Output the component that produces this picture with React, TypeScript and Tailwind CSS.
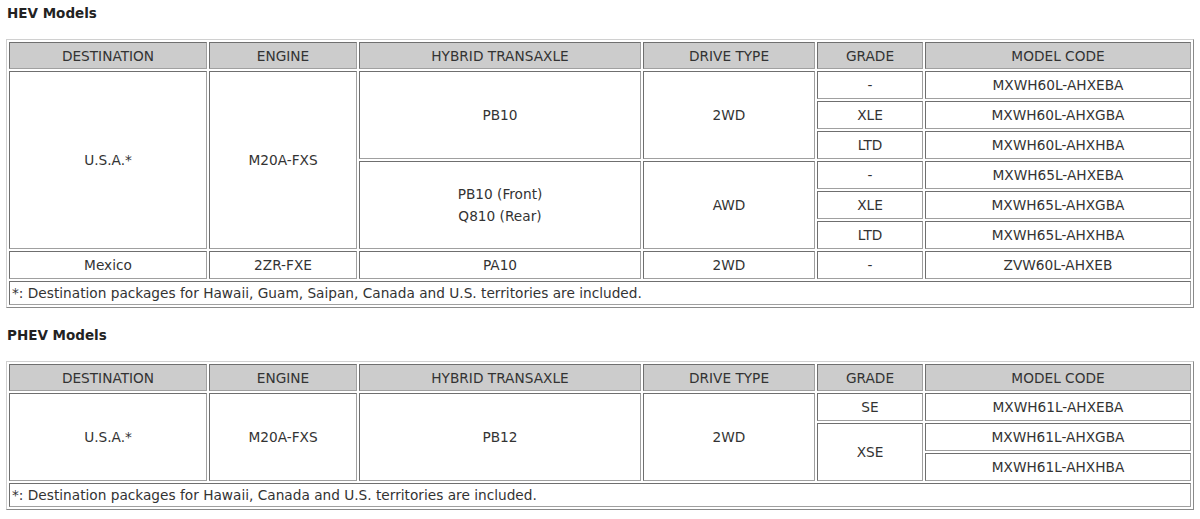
import React from "react";

type Row = { cells: { text: React.ReactNode; rowSpan?: number; lh?: boolean }[] };

const headers = [
  { label: "DESTINATION", w: "w-[198px]" },
  { label: "ENGINE", w: "w-[148px]" },
  { label: "HYBRID TRANSAXLE", w: "w-[282px]" },
  { label: "DRIVE TYPE", w: "w-[172px]" },
  { label: "GRADE", w: "w-[106px]" },
  { label: "MODEL CODE", w: "w-[266px]" },
];

const hevRows: Row[] = [
  {
    cells: [
      { text: "U.S.A.*", rowSpan: 6 },
      { text: "M20A-FXS", rowSpan: 6 },
      { text: "PB10", rowSpan: 3 },
      { text: "2WD", rowSpan: 3 },
      { text: "-" },
      { text: "MXWH60L-AHXEBA" },
    ],
  },
  { cells: [{ text: "XLE" }, { text: "MXWH60L-AHXGBA" }] },
  { cells: [{ text: "LTD" }, { text: "MXWH60L-AHXHBA" }] },
  {
    cells: [
      {
        text: (
          <>
            PB10 (Front)
            <br />
            Q810 (Rear)
          </>
        ),
        rowSpan: 3,
        lh: true,
      },
      { text: "AWD", rowSpan: 3 },
      { text: "-" },
      { text: "MXWH65L-AHXEBA" },
    ],
  },
  { cells: [{ text: "XLE" }, { text: "MXWH65L-AHXGBA" }] },
  { cells: [{ text: "LTD" }, { text: "MXWH65L-AHXHBA" }] },
  {
    cells: [
      { text: "Mexico" },
      { text: "2ZR-FXE" },
      { text: "PA10" },
      { text: "2WD" },
      { text: "-" },
      { text: "ZVW60L-AHXEB" },
    ],
  },
];

const phevRows: Row[] = [
  {
    cells: [
      { text: "U.S.A.*", rowSpan: 3 },
      { text: "M20A-FXS", rowSpan: 3 },
      { text: "PB12", rowSpan: 3 },
      { text: "2WD", rowSpan: 3 },
      { text: "SE" },
      { text: "MXWH61L-AHXEBA" },
    ],
  },
  { cells: [{ text: "XSE", rowSpan: 2 }, { text: "MXWH61L-AHXGBA" }] },
  { cells: [{ text: "MXWH61L-AHXHBA" }] },
];

const cellBorder =
  "border border-t-[#6f6f6f] border-l-[#6f6f6f] border-b-[#a0a0a0] border-r-[#a0a0a0]";

const ModelTable = ({ rows, note }: { rows: Row[]; note: string }) => (
  <table className="table-fixed w-[1188px] border-separate border-spacing-[2px] border border-t-[#d0d0d0] border-l-[#d0d0d0] border-b-[#8a8a8a] border-r-[#8a8a8a] text-[13.7px]">
    <thead>
      <tr>
        {headers.map((h) => (
          <th
            key={h.label}
            className={`${h.w} ${cellBorder} h-[27px] p-0 bg-[#cccccc] font-normal text-center align-middle leading-[18px]`}
          >
            {h.label}
          </th>
        ))}
      </tr>
    </thead>
    <tbody>
      {rows.map((row, i) => (
        <tr key={i}>
          {row.cells.map((c, j) => (
            <td
              key={j}
              rowSpan={c.rowSpan}
              className={`${cellBorder} h-[28px] p-0 text-center align-middle ${
                c.lh ? "leading-[22px]" : "leading-[18px]"
              }`}
            >
              {c.text}
            </td>
          ))}
        </tr>
      ))}
      <tr>
        <td colSpan={6} className={`${cellBorder} h-[24px] px-[2px] py-0 text-left leading-[18px]`}>
          {note}
        </td>
      </tr>
    </tbody>
  </table>
);

export default function App() {
  return (
    <div className="min-h-screen bg-white px-[6px] pt-[4px] font-['DejaVu_Sans',Verdana,sans-serif] text-[#333333]">
      <h2 className="pl-[1px] text-[13.5px] font-bold leading-[18px] text-[#222222]">HEV Models</h2>
      <div className="mt-[17px]">
        <ModelTable
          rows={hevRows}
          note="*: Destination packages for Hawaii, Guam, Saipan, Canada and U.S. territories are included."
        />
      </div>
      <h2 className="mt-[18px] pl-[1px] text-[13.5px] font-bold leading-[18px] text-[#222222]">PHEV Models</h2>
      <div className="mt-[17px]">
        <ModelTable
          rows={phevRows}
          note="*: Destination packages for Hawaii, Canada and U.S. territories are included."
        />
      </div>
    </div>
  );
}
